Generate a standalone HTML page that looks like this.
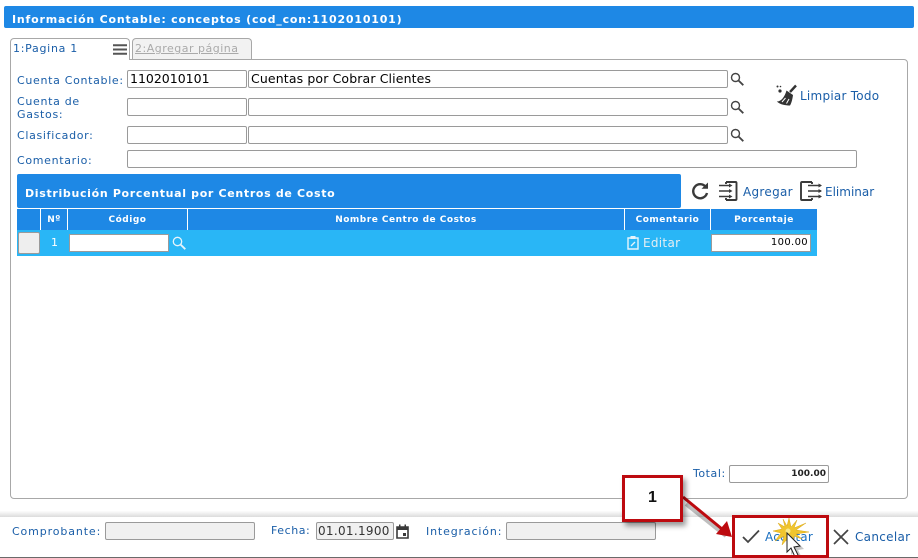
<!DOCTYPE html>
<html lang="es"><head><meta charset="utf-8"><title>Información Contable</title>
<style>
html,body{margin:0;padding:0;background:#fff}
#p{position:relative;width:918px;height:558px;overflow:hidden;background:#fff;font-family:"DejaVu Sans","Liberation Sans",sans-serif}
#p div,#p span.t{position:absolute;white-space:nowrap;box-sizing:border-box}
.l{color:#1a5ea8;font-size:11px;line-height:13px;letter-spacing:.68px}
.i{background:#fff;border:1px solid #9a9a9a;border-radius:2px;height:18px;color:#000;font-size:12px;line-height:16px;padding-left:2px}
.h{background:#1e88e5;color:#fff;font-weight:bold;font-size:9px;height:21px;line-height:23px;text-align:center;letter-spacing:.5px;border-left:1px solid #fff}
svg{position:absolute;overflow:visible}
</style></head><body><div id="p">

<div style="left:4px;top:6px;width:910px;height:22px;background:#1e88e5;border-radius:2px;color:#fff;font-weight:bold;font-size:11px;line-height:27px;padding-left:8px;letter-spacing:.8px">Información Contable: conceptos (cod_con:1102010101)</div>

<div style="left:10px;top:59px;width:898px;height:440px;border:1px solid #a8a8a8;border-radius:0 4px 4px 4px"></div>
<div style="left:132px;top:38px;width:120px;height:21px;background:#f2f2f2;border:1px solid #a8a8a8;border-bottom:none;border-radius:4px 4px 0 0;color:#aaa;font-size:11px;line-height:20px;padding-left:2px;letter-spacing:.5px"><u>2:Agregar página</u></div>
<div style="left:10px;top:38px;width:120px;height:22px;background:#fff;border:1px solid #a8a8a8;border-bottom:none;border-radius:4px 4px 0 0;color:#1a5ea8;font-size:11px;line-height:20px;padding-left:2px;letter-spacing:.72px">1:Pagina 1</div>
<svg style="left:113px;top:44px" width="15" height="11"><path d="M0 1.2H14M0 5.5H14M0 9.8H14" stroke="#555" stroke-width="2"/></svg>

<div class="l" style="left:17px;top:74px">Cuenta Contable:</div>
<div class="l" style="left:17px;top:95px;line-height:13px">Cuenta de</div>
<div class="l" style="left:17px;top:108px">Gastos:</div>
<div class="l" style="left:17px;top:129px">Clasificador:</div>
<div class="l" style="left:17px;top:154px">Comentario:</div>

<div class="i" style="left:127px;top:70px;width:120px;font-size:12.5px;letter-spacing:0">1102010101</div>
<div class="i" style="left:248px;top:70px;width:480px;font-size:12.5px;letter-spacing:.13px">Cuentas por Cobrar Clientes</div>
<div class="i" style="left:127px;top:98px;width:120px"></div>
<div class="i" style="left:248px;top:98px;width:480px"></div>
<div class="i" style="left:127px;top:126px;width:120px"></div>
<div class="i" style="left:248px;top:126px;width:480px"></div>
<div class="i" style="left:127px;top:150px;width:730px"></div>

<svg style="left:730px;top:72px" width="14" height="14"><circle cx="5.5" cy="5.5" r="4" fill="none" stroke="#444" stroke-width="1.4"/><path d="M8.5 8.5L13.3 13.2" stroke="#444" stroke-width="1.8"/></svg>
<svg style="left:730px;top:100px" width="14" height="14"><circle cx="5.5" cy="5.5" r="4" fill="none" stroke="#444" stroke-width="1.4"/><path d="M8.5 8.5L13.3 13.2" stroke="#444" stroke-width="1.8"/></svg>
<svg style="left:730px;top:128px" width="14" height="14"><circle cx="5.5" cy="5.5" r="4" fill="none" stroke="#444" stroke-width="1.4"/><path d="M8.5 8.5L13.3 13.2" stroke="#444" stroke-width="1.8"/></svg>

<svg style="left:776px;top:85px" width="22" height="21"><circle cx="1.5" cy="1.5" r="1" fill="#333"/><circle cx="4.5" cy="1.5" r=".8" fill="#333"/><circle cx="4" cy="6" r="1.6" fill="#333"/><path d="M20 .5L14 7" stroke="#333" stroke-width="2.4"/><path d="M10.5 5.5L17 10C16.5 14 15.5 18 14 20.5C9 20.5 4 19.5 .8 16.5C5 16.5 8.5 12.5 10.5 5.5Z" fill="#333"/><path d="M6 17L9.5 13M10.5 18.5L13 14" stroke="#fff" stroke-width="1"/></svg>
<div style="left:800px;top:88px;color:#1a5ea8;font-size:12px;line-height:16px;letter-spacing:.25px">Limpiar Todo</div>

<div style="left:17px;top:174px;width:664px;height:34px;background:#1e88e5;border-radius:2px;color:#fff;font-weight:bold;font-size:11px;line-height:39px;padding-left:8px;letter-spacing:.67px">Distribución Porcentual por Centros de Costo</div>

<svg style="left:691px;top:182px" width="18" height="19"><path d="M14.8 5A7 7 0 1 0 16 11" fill="none" stroke="#3a3a3a" stroke-width="2.4"/><path d="M10.5 6.8H17V.5Z" fill="#3a3a3a"/></svg>
<svg style="left:718px;top:181px" width="20" height="20"><path d="M8 1H17.5Q18.5 1 18.5 2V18Q18.5 19 17.5 19H8M8 1V3M8 17V19" fill="none" stroke="#3a3a3a" stroke-width="1.9"/><path d="M1 4.5H13M1 10H13M1 15.5H13" stroke="#3a3a3a" stroke-width="1.5"/><path d="M11 2.5L14.5 4.5L11 6.5ZM11 8L14.5 10L11 12ZM11 13.5L14.5 15.5L11 17.5Z" fill="#3a3a3a"/></svg>
<div style="left:743px;top:184px;color:#1a5ea8;font-size:12px;line-height:16px;letter-spacing:.3px">Agregar</div>
<svg style="left:800px;top:181px" width="22" height="20"><path d="M12 1H2Q1 1 1 2V18Q1 19 2 19H12M12 1V3M12 17V19" fill="none" stroke="#3a3a3a" stroke-width="1.9"/><path d="M8 4.5H21M8 10H21M8 15.5H21" stroke="#3a3a3a" stroke-width="1.5"/><path d="M18.5 2.5L22 4.5L18.5 6.5ZM18.5 8L22 10L18.5 12ZM18.5 13.5L22 15.5L18.5 17.5Z" fill="#3a3a3a"/></svg>
<div style="left:825px;top:184px;color:#1a5ea8;font-size:12px;line-height:16px">Eliminar</div>

<div style="left:17px;top:209px;width:800px;height:21px;background:#1e88e5"></div>
<div class="h" style="left:40px;top:209px;width:27px">Nº</div>
<div class="h" style="left:67px;top:209px;width:120px">Código</div>
<div class="h" style="left:187px;top:209px;width:437px">Nombre Centro de Costos</div>
<div class="h" style="left:624px;top:209px;width:86px">Comentario</div>
<div class="h" style="left:710px;top:209px;width:107px">Porcentaje</div>
<div style="left:17px;top:230px;width:800px;height:26px;background:#29b6f6"></div>
<div style="left:18px;top:232px;width:22px;height:22px;background:#eee;border:1px solid #9a9a9a;border-radius:2px"></div>
<div style="left:40px;top:236px;width:29px;text-align:center;color:#fff;font-size:11px;line-height:14px">1</div>
<div style="left:69px;top:234px;width:100px;height:18px;background:#fff;border:1px solid #9a9a9a"></div>
<svg style="left:172px;top:236px" width="14" height="14"><circle cx="5.5" cy="5.5" r="4.2" fill="none" stroke="#e6f4fb" stroke-width="1.3"/><path d="M8.5 8.5L13.3 13.2" stroke="#e6f4fb" stroke-width="1.8"/></svg>
<svg style="left:627px;top:235px" width="12" height="15"><path d="M1 3H11V14H1Z" fill="none" stroke="#e6f4fb" stroke-width="1.4"/><path d="M3.5 1H8.5V4H3.5Z" fill="#e6f4fb"/><path d="M4 11L8 7" stroke="#e6f4fb" stroke-width="1.3"/></svg>
<div style="left:643px;top:235px;color:#e4eef3;font-size:12px;line-height:16px;letter-spacing:.3px">Editar</div>
<div style="left:711px;top:234px;width:100px;height:18px;background:#fff;border:1px solid #9a9a9a;font-size:10px;line-height:16px;text-align:right;padding-right:2px;letter-spacing:.35px;color:#000">100.00</div>

<div class="l" style="left:693px;top:467px;letter-spacing:.55px">Total:</div>
<div style="left:729px;top:465px;width:100px;height:18px;border:1px solid #9a9a9a;border-radius:2px;font-size:9px;font-weight:bold;line-height:17px;text-align:right;padding-right:2px;color:#222">100.00</div>

<div style="left:0;top:508px;width:918px;height:9px;background:linear-gradient(#fff,#fff 30%,#dcdcdc)"></div>
<div style="left:0;top:517px;width:918px;height:40px;background:#fff"></div>
<div style="left:0;top:557px;width:918px;height:1px;background:#6a6a6a"></div>

<div class="l" style="left:12px;top:525px;letter-spacing:.88px">Comprobante:</div>
<div class="i" style="left:105px;top:522px;width:150px;background:#f0f0f0"></div>
<div class="l" style="left:271px;top:524px;letter-spacing:.55px">Fecha:</div>
<div class="i" style="left:316px;top:522px;width:78px;background:#f0f0f0;font-size:12px;letter-spacing:.3px;padding-left:1px;color:#333">01.01.1900</div>
<svg style="left:396px;top:524px" width="13" height="15"><path d="M1 3H12V14H1Z" fill="none" stroke="#3a3a3a" stroke-width="1.6"/><path d="M1 3H12V6H1ZM3 .5H4.5V3H3ZM8.5 .5H10V3H8.5ZM7 9H10V12H7Z" fill="#3a3a3a"/></svg>
<div class="l" style="left:426px;top:525px;letter-spacing:.85px">Integración:</div>
<div class="i" style="left:506px;top:522px;width:150px;background:#f0f0f0"></div>

<svg style="left:742px;top:529px" width="18" height="15"><path d="M1 8L6 13L17 1.5" fill="none" stroke="#444" stroke-width="1.8"/></svg>
<div style="left:765px;top:530px;color:#1a6fc0;font-size:12px;line-height:15px;letter-spacing:.2px">Aceptar</div>
<svg style="left:833px;top:529px" width="16" height="16"><path d="M1 1L15 15M15 1L1 15" stroke="#444" stroke-width="1.7"/></svg>
<div style="left:855px;top:530px;color:#1a5ea8;font-size:12px;line-height:15px;letter-spacing:.3px">Cancelar</div>

<svg style="left:0;top:0" width="918" height="558">
<path d="M684 500L724 532" stroke="#000" stroke-opacity=".25" stroke-width="4" transform="translate(2 4)"/>
<path d="M683 497L722 529" stroke="#bd0a0f" stroke-width="3"/>
<path d="M732 537L716 534L727 521Z" fill="#bd0a0f"/>
<path d="M789 518L791 527L797 520L794 528L806 523L796 530L809 532L796 534L802 539L794 536L793 546L789 537L782 545L784 536L775 541L781 533L773 531L782 529L778 523L785 527L783 519L787 526Z" fill="#f0c52e" stroke="#dca91a" stroke-width=".5"/>
<circle cx="788" cy="531" r="2.5" fill="#f7e88a"/>
<path d="M788 535V554L792 550L796 559L799 557L795 549L801 548Z" fill="#000" opacity=".22" transform="translate(3 1)"/>
<path d="M787 533V552L791 548L795 557L798 555L794 547L800 546Z" fill="#fff" stroke="#222" stroke-width="1"/>
</svg>

<div style="left:732px;top:515px;width:97px;height:43px;border:3px solid #bd0a0f"></div>
<div style="left:622px;top:475px;width:61px;height:47px;background:#fff;border:3px solid #bd0a0f;box-shadow:3px 4px 5px rgba(0,0,0,.4);font-family:'Liberation Sans',sans-serif;font-weight:bold;font-size:16px;line-height:39px;text-align:center;color:#111">1</div>

</div></body></html>
